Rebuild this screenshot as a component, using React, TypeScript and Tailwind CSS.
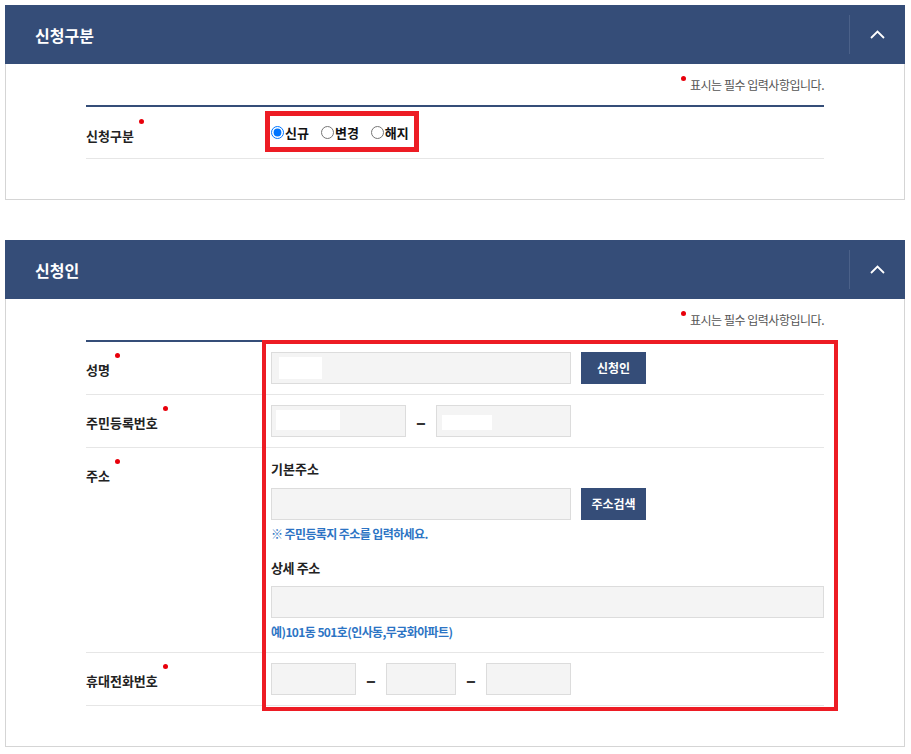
import React from 'react'

function Req({ children }: { children: React.ReactNode }) {
  return (
    <span className="relative inline-block">
      {children}
      <span className="absolute right-[-10px] top-[-7px] h-[5px] w-[5px] rounded-full bg-[#e8000b]" />
    </span>
  )
}

function PanelHeader({ title }: { title: string }) {
  return (
    <div className="flex h-[59px] items-center bg-[#354d78]">
      <h2 className="flex-1 pl-[30px] text-[16px] font-bold text-white">{title}</h2>
      <div className="h-[39px] w-px bg-[#4b6189]" />
      <button className="flex h-full w-[55px] items-center justify-center">
        <svg width="15" height="9" viewBox="0 0 15 9" fill="none">
          <polyline points="1,8 7.5,1.5 14,8" stroke="#fff" strokeWidth="1.8" />
        </svg>
      </button>
    </div>
  )
}

function Notice() {
  return (
    <div className="mb-[11px] flex h-[18px] items-center justify-end">
      <span className="relative pl-[9px] text-[12px] tracking-[-0.04em] text-[#555]">
        <span className="absolute left-0 top-[0px] h-[5px] w-[5px] rounded-full bg-[#e8000b]" />
        표시는 필수 입력사항입니다.
      </span>
    </div>
  )
}

function Label({ text, className = '' }: { text: string; className?: string }) {
  return (
    <div className={`w-[185px] shrink-0 text-[13px] font-bold leading-[20px] text-[#222] ${className}`}>
      <Req>{text}</Req>
    </div>
  )
}

function Box({ className = '', children }: { className?: string; children?: React.ReactNode }) {
  return (
    <div className={`flex h-[32px] shrink-0 items-start border border-[#dcdcdc] bg-[#f4f4f4] ${className}`}>
      {children}
    </div>
  )
}

function Btn({ text }: { text: string }) {
  return (
    <button className="ml-[10px] h-[32px] w-[65px] bg-[#354d78] text-[12px] font-bold text-white">
      {text}
    </button>
  )
}

function Dash() {
  return (
    <span className="w-[30px] shrink-0 text-center text-[18px] font-black leading-[32px] text-[#333]">–</span>
  )
}

export default function App() {
  return (
    <div className="min-h-screen bg-white pt-[5px] font-['Noto_Sans_CJK_KR','Noto_Sans',sans-serif] text-[#222]">
      {/* 신청구분 */}
      <section className="ml-[5px] w-[900px]">
        <PanelHeader title="신청구분" />
        <div className="border-x border-b border-[#d5d5d5] px-[80px] pb-[40px] pt-[12px]">
          <Notice />
          <div className="relative border-t-2 border-[#354d78]">
            <div className="flex h-[52px] items-center border-b border-[#e6e6e6]">
              <Label text="신청구분" className="pt-[6px]" />
              <div className="flex items-center text-[13px] font-bold text-[#111]">
                <label className="flex items-center">
                  <input type="radio" name="kind" defaultChecked className="h-[13px] w-[13px]" />
                  <span className="ml-px">신규</span>
                </label>
                <label className="ml-[12px] flex items-center">
                  <input type="radio" name="kind" className="h-[13px] w-[13px]" />
                  <span className="ml-px">변경</span>
                </label>
                <label className="ml-[12px] flex items-center">
                  <input type="radio" name="kind" className="h-[13px] w-[13px]" />
                  <span className="ml-px">해지</span>
                </label>
              </div>
            </div>
            <div className="absolute left-[179px] top-[4px] h-[41px] w-[154px] border-[5px] border-[#ed1c24]" />
          </div>
        </div>
      </section>

      {/* 신청인 */}
      <section className="ml-[5px] mt-[40px] w-[900px]">
        <PanelHeader title="신청인" />
        <div className="border-x border-b border-[#d5d5d5] px-[80px] pb-[40px] pt-[12px]">
          <Notice />
          <div className="relative border-t-2 border-[#354d78]">
            {/* 성명 */}
            <div className="flex items-center border-b border-[#e6e6e6] py-[10px]">
              <Label text="성명" className="pt-[3px]" />
              <Box className="w-[300px] pl-[7px] pt-[4px]">
                <span className="block h-[22px] w-[43px] bg-white" />
              </Box>
              <Btn text="신청인" />
            </div>
            {/* 주민등록번호 */}
            <div className="flex items-center border-b border-[#e6e6e6] py-[10px]">
              <Label text="주민등록번호" className="pt-[3px]" />
              <Box className="w-[135px] pl-[4px] pt-[4px]">
                <span className="block h-[20px] w-[64px] bg-white" />
              </Box>
              <Dash />
              <Box className="w-[135px] pl-[5px] pt-[9px]">
                <span className="block h-[15px] w-[50px] bg-white" />
              </Box>
            </div>
            {/* 주소 */}
            <div className="flex border-b border-[#e6e6e6] pb-[12px] pt-[13px]">
              <Label text="주소" className="pt-[5px]" />
              <div className="flex-1">
                <p className="text-[13px] font-bold leading-[16px] text-[#222]">기본주소</p>
                <div className="mt-[11px] flex">
                  <Box className="w-[300px]" />
                  <Btn text="주소검색" />
                </div>
                <p className="mt-[6px] text-[12px] font-bold leading-[16px] tracking-[-0.05em] text-[#2c74c4]">
                  ※ 주민등록지 주소를 입력하세요.
                </p>
                <p className="mt-[18px] text-[13px] font-bold leading-[16px] tracking-[-0.03em] text-[#222]">상세 주소</p>
                <Box className="mt-[10px] w-full" />
                <p className="mt-[6px] text-[12px] font-bold leading-[16px] tracking-[-0.05em] text-[#2c74c4]">
                  예)101동 501호(인사동,무궁화아파트)
                </p>
              </div>
            </div>
            {/* 휴대전화번호 */}
            <div className="flex items-center border-b border-[#e6e6e6] py-[10px]">
              <Label text="휴대전화번호" className="pt-[3px]" />
              <Box className="w-[85px]" />
              <Dash />
              <Box className="w-[70px]" />
              <Dash />
              <Box className="w-[85px]" />
            </div>
            <div className="absolute left-[176px] top-[-2px] h-[371px] w-[576px] border-4 border-[#ed1c24]" />
          </div>
        </div>
      </section>
    </div>
  )
}
